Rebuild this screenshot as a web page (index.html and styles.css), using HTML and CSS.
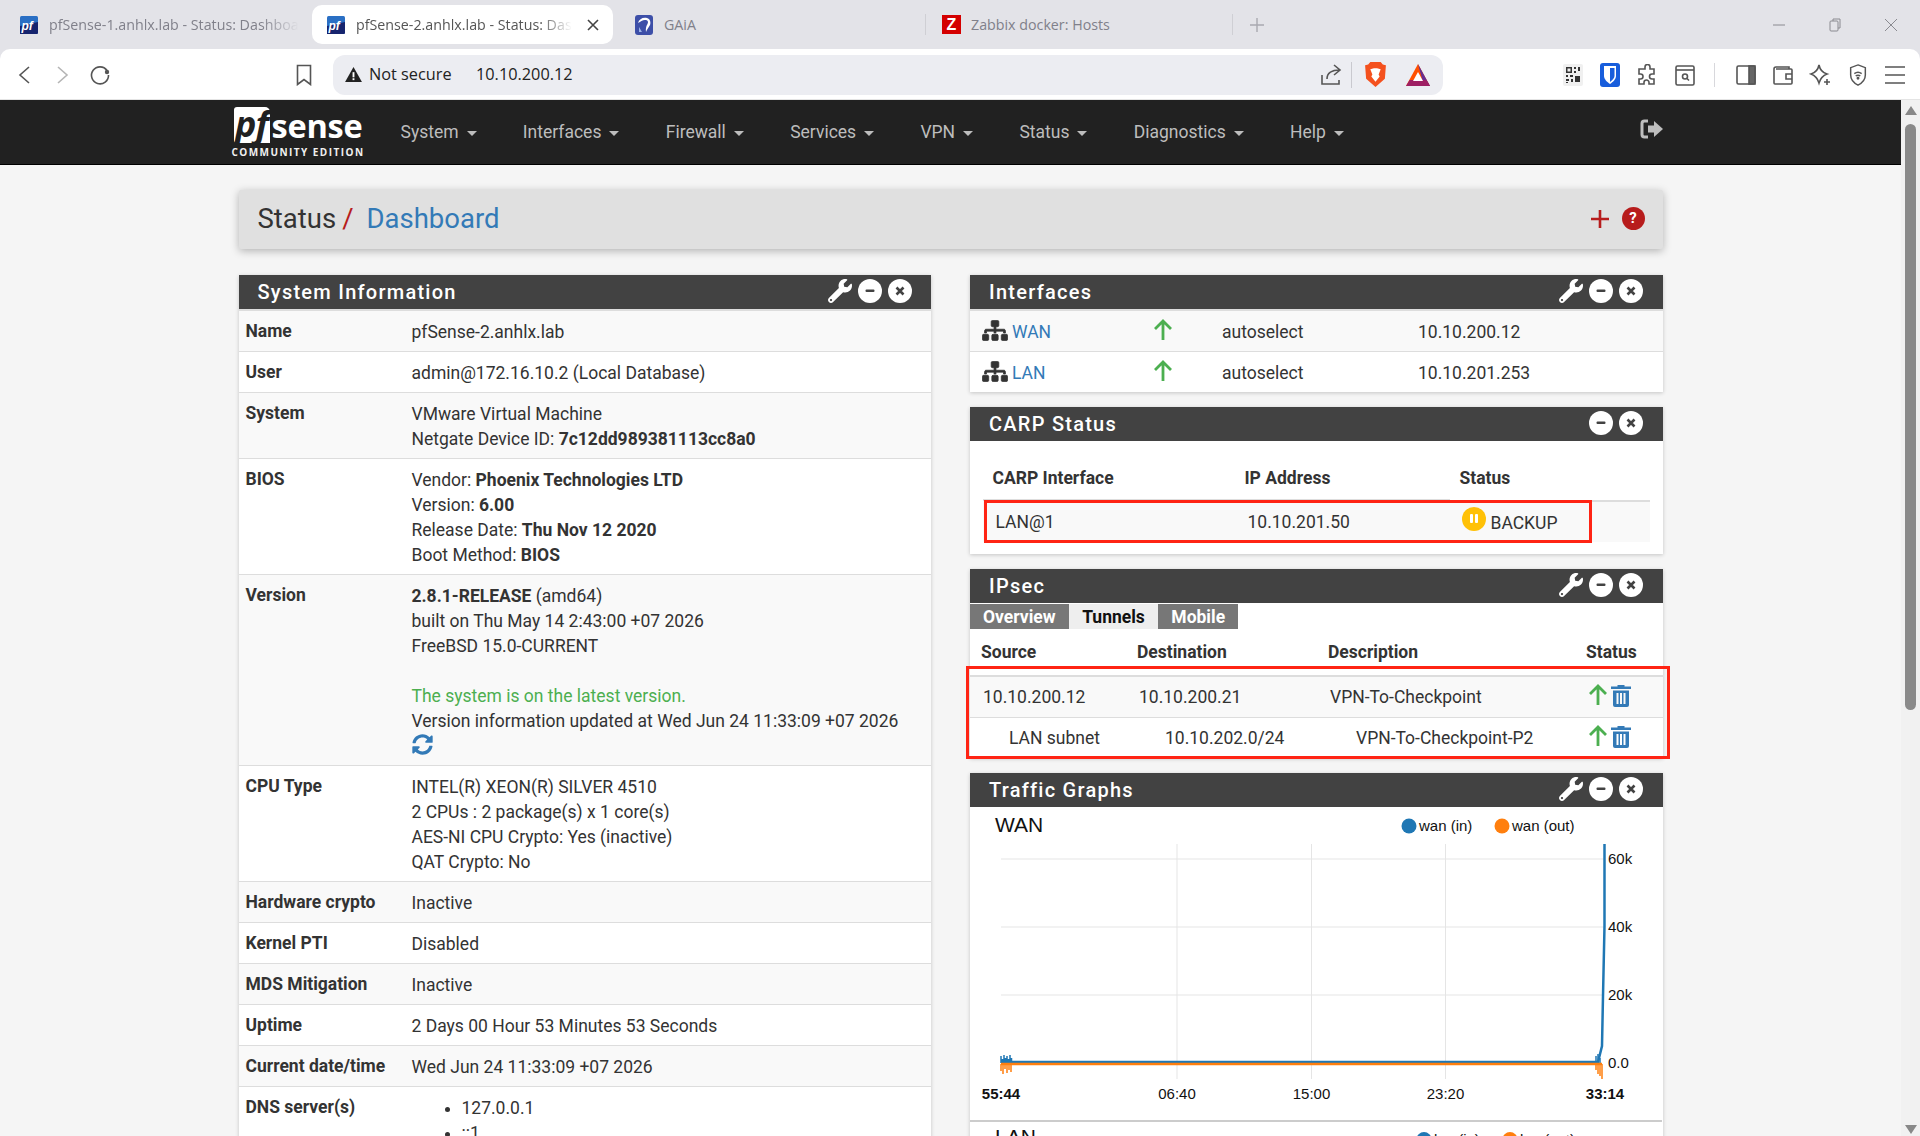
FILE: index.html
```html
<!DOCTYPE html>
<html lang="en">
<head>
<meta charset="UTF-8">
<title>pfSense-2.anhlx.lab - Status: Dashboard</title>
<link rel="stylesheet" href="styles.css">
</head>
<body>
<svg class="sprites" width="0" height="0">
    <symbol id="i-wrench" viewBox="0 0 512 512"><path d="M507.73 109.1c-2.24-9.03-13.54-12.09-20.12-5.51l-74.36 74.36-67.88-11.31-11.31-67.88 74.36-74.36c6.62-6.62 3.43-17.9-5.66-20.16-47.38-11.74-99.55.91-136.58 37.93-39.64 39.64-50.55 97.1-34.05 147.2L18.74 402.76c-24.99 24.99-24.99 65.51 0 90.5 24.99 24.99 65.51 24.99 90.5 0l213.21-213.21c50.12 16.71 107.47 5.68 147.37-34.22 37.07-37.07 49.7-89.32 37.91-136.73zM64 472c-13.25 0-24-10.75-24-24 0-13.26 10.75-24 24-24s24 10.74 24 24c0 13.25-10.75 24-24 24z"/></symbol>
    <symbol id="i-minus" viewBox="0 0 24 24"><circle cx="12" cy="12" r="12" fill="#fff"/><rect x="7.5" y="10.5" width="9" height="2.6" rx="1" fill="#424242"/></symbol>
    <symbol id="i-close" viewBox="0 0 24 24"><circle cx="12" cy="12" r="12" fill="#fff"/><path d="M8.5 8.5l7 7M15.500 8.500l-7 7" stroke="#424242" stroke-width="2.600" fill="none"/></symbol>
    <symbol id="i-sitemap" viewBox="-10 -10 660 532"><path d="M128 352H32c-17.67 0-32 14.33-32 32v96c0 17.67 14.33 32 32 32h96c17.67 0 32-14.33 32-32v-96c0-17.67-14.33-32-32-32zm-24-80h192v48h48v-48h192v48h48v-57.59c0-21.17-17.23-38.41-38.41-38.41H344v-64h40c17.67 0 32-14.33 32-32V32c0-17.67-14.33-32-32-32H256c-17.67 0-32 14.33-32 32v96c0 17.67 14.33 32 32 32h40v64H94.41C73.23 224 56 241.23 56 262.41V320h48v-48zm264 80h-96c-17.67 0-32 14.33-32 32v96c0 17.67 14.33 32 32 32h96c17.67 0 32-14.33 32-32v-96c0-17.67-14.33-32-32-32zm240 0h-96c-17.67 0-32 14.33-32 32v96c0 17.67 14.33 32 32 32h96c17.67 0 32-14.33 32-32v-96c0-17.67-14.33-32-32-32z" stroke="#333" stroke-width="20"/></symbol>
    <symbol id="i-up" viewBox="0 0 20 22"><path d="M10 21V2M2 10l8-8 8 8" fill="none" stroke="#4caf50" stroke-width="2.800"/></symbol>
    <symbol id="i-trash" viewBox="0 0 20 23"><path d="M6.500 2.500V1h7v1.500H20V5H0V2.500zM2 6.500h16V21a2 2 0 0 1-2 2H4a2 2 0 0 1-2-2zM5.500 9v11h2V9zm3.500 0v11h2V9zm3.500 0v11h2V9z" fill="#337ab7" fill-rule="evenodd"/></symbol>
    <symbol id="i-sync" viewBox="0 0 512 512"><path d="M370.72 133.28C339.458 104.008 298.888 87.962 255.848 88c-77.458.068-144.328 53.178-162.791 126.85-1.344 5.363-6.122 9.15-11.651 9.15H24.103c-7.498 0-13.194-6.807-11.807-14.176C33.933 94.924 134.813 8 256 8c66.448 0 126.791 26.136 171.315 68.685L463.03 40.97C478.149 25.851 504 36.559 504 57.941V192c0 13.255-10.745 24-24 24H345.941c-21.382 0-32.09-25.851-16.971-40.971l41.75-41.749zM32 296h134.059c21.382 0 32.09 25.851 16.971 40.971l-41.75 41.75c31.262 29.273 71.835 45.319 114.876 45.28 77.418-.07 144.315-53.144 162.787-126.849 1.344-5.363 6.122-9.15 11.651-9.15h57.304c7.498 0 13.194 6.807 11.807 14.176C478.067 417.076 377.187 504 256 504c-66.448 0-126.791-26.136-171.315-68.685L48.97 471.03C33.851 486.149 8 475.441 8 454.059V320c0-13.255 10.745-24 24-24z"/></symbol>
    <symbol id="i-pf" viewBox="0 0 18 18"><rect width="18" height="18" rx="1.500" fill="#2a6fc4"/><path d="M0 10L18 6V16.500a1.500 1.500 0 0 1-1.500 1.500H0z" fill="#16246e"/><text x="1.500" y="14" class="fav-text">pf</text></symbol>
</svg>

<div class="tabstrip">
    <div class="tab tab-first"><svg class="fav"><use href="#i-pf"/></svg><span class="tab-title tab-fade">pfSense-1.anhlx.lab - Status: Dashboa</span></div>
    <div class="tab tab-active"><svg class="fav"><use href="#i-pf"/></svg><span class="tab-title tab-fade">pfSense-2.anhlx.lab - Status: Das</span>
        <svg class="tab-x" viewBox="0 0 12 12"><path d="M1 1l10 10M11 1L1 11"/></svg></div>
    <div class="tab tab-gaia">
        <svg class="fav fav-gaia" viewBox="0 0 18 20"><rect width="18" height="20" rx="3" fill="#3d4fa8"/><path d="M3 8c1-4 5-6 9-5 3 1 4 4 3 7-1 2-3 4-4 7-.5-3 0-6 1.500-8 1-2 .5-3.500-1.500-4-3-.5-5 1-8 3z" fill="#fff"/><path d="M4 12l3 5H4z" fill="#9db4e8"/></svg>
        <span class="tab-title">GAiA</span></div>
    <div class="tab-sep"></div>
    <div class="tab tab-zabbix"><span class="fav-z">Z</span><span class="tab-title">Zabbix docker: Hosts</span></div>
    <div class="tab-sep"></div>
    <svg class="tab-plus" viewBox="0 0 14 14"><path d="M7 0v14M0 7h14"/></svg>
    <div class="win-controls">
        <svg class="win-btn" viewBox="0 0 14 14"><path d="M1 7h12"/></svg>
        <svg class="win-btn" viewBox="0 0 14 14"><rect x="2" y="3" width="8" height="10" rx="1"/><path d="M5 3V1h7v9h-2"/></svg>
        <svg class="win-btn" viewBox="0 0 14 14"><path d="M1 1l12 12M13 1L1 13"/></svg>
    </div>
</div>

<div class="toolbar">
    <span class="tb-btn"><svg class="tb-icon" viewBox="0 0 22 22"><path d="M15 3L6 11l9 8"/></svg></span>
    <span class="tb-btn"><svg class="tb-icon tb-dim" viewBox="0 0 22 22"><path d="M7 3l9 8-9 8"/></svg></span>
    <span class="tb-btn"><svg class="tb-icon" viewBox="0 0 22 22"><path d="M18 6.500A8.500 8.500 0 1 0 19.500 11"/><circle cx="18" cy="8" r="2.200" fill="#555" stroke="none"/></svg></span>
    <span class="tb-btn tb-bookmark"><svg class="tb-icon" viewBox="0 0 22 22"><path d="M4.500 1.500h13v19L11 15.500l-6.500 5z"/></svg></span>
    <div class="address">
        <svg class="warn" viewBox="0 0 18 16"><path d="M9 0l9 16H0z" fill="#222"/><rect x="8" y="5.500" width="2" height="5.500" fill="#fff"/><rect x="8" y="12" width="2" height="2" fill="#fff"/></svg>
        <span class="not-secure">Not secure</span>
        <span class="url">10.10.200.12</span>
        <span class="addr-spacer"></span>
        <svg class="tb-icon addr-share" viewBox="0 0 22 22"><path d="M2 11v9h17v-4M7 15c0-6 4-9 13-9M14 1l6 5-6 5"/></svg>
        <span class="addr-sep"></span>
        <svg class="brave" viewBox="0 0 20 24"><path d="M5 0h10l2 2.500L20 3l-1 13-9 8-9-8L0 3l3-.500z" fill="#f4511e"/><path d="M5 7l3.500-1h3L15 7l-2 5 1 2-4 5-4-5 1-2z" fill="#fff"/></svg>
        <svg class="bat" viewBox="0 0 24 22"><path d="M12 0l12 22H0z" fill="#ff5000"/><path d="M12 0l12 22h-6z" fill="#662d91"/><path d="M0 22l3.600-6h16.800l3.600 6z" fill="#9e1f63"/><path d="M12 8l5 9H7z" fill="#fff"/></svg>
    </div>
    <span class="tb-btn tb-exts"><svg class="ext-qr" viewBox="0 0 20 22"><rect width="20" height="22" rx="2" fill="#f0f0f0"/><path d="M3 3h6v6H3zM4.500 4.500v3h3v-3zM11 3h2v2h-2zM15 3h2v4h-2zM11 7h2v2h-2zM3 11h2v2H3zM7 11h3v2H7zM3 15h3v2H3zM8 15h2v3H8zM3 18h2v1H3zM12 12h5v6h-5z" fill="#333" fill-rule="evenodd"/></svg></span>
    <span class="tb-btn"><svg class="ext-bw" viewBox="0 0 20 24"><rect width="20" height="24" rx="3" fill="#175ddc"/><path d="M4 3h12v10c0 3-3 6-6 8-3-2-6-5-6-8z" fill="#fff"/><path d="M10 5h4.500v8c0 2-2 4-4.500 6z" fill="#175ddc"/></svg></span>
    <span class="tb-btn"><svg class="tb-icon" viewBox="0 0 22 22"><path d="M9 3a2.500 2.500 0 0 1 5 0v2h4v5h-2a2.500 2.500 0 0 0 0 5h2v5h-5v-1.500a2.500 2.500 0 0 0-5 0V20H3v-5h1.500a2.500 2.500 0 0 0 0-5H3V5h6z"/></svg></span>
    <span class="tb-btn"><svg class="tb-icon" viewBox="0 0 22 22"><rect x="2" y="2" width="18" height="19" rx="1.500"/><path d="M2 6h18"/><circle cx="11" cy="12.500" r="2.500"/><path d="M13 14.500l2 2"/></svg></span>
    <span class="tb-sep"></span>
    <span class="tb-btn"><svg class="tb-icon" viewBox="0 0 22 22"><rect x="2" y="2" width="18" height="18" rx="1.500"/><rect x="14" y="2" width="6" height="18" fill="#666"/></svg></span>
    <span class="tb-btn"><svg class="tb-icon" viewBox="0 0 22 22"><path d="M17 5V3H4a2 2 0 0 0-2 2v14a1 1 0 0 0 1 1h16a1 1 0 0 0 1-1V6a1 1 0 0 0-1-1H4"/><path d="M20 10h-6v5h6"/></svg></span>
    <span class="tb-btn"><svg class="tb-icon" viewBox="0 0 22 22"><path d="M10 1c1 5 3 7.500 8 9-4 1.500-6.500 4-8 9-1.500-5-4-7.500-8-9 5-1.500 7-4 8-9z"/><path d="M18 15v6M15 18h6"/></svg></span>
    <span class="tb-btn"><svg class="tb-icon" viewBox="0 0 22 24"><path d="M11 1l8 3v8c0 5-4 9-8 11-4-2-8-6-8-11V4z"/><path d="M7 10.500c2.500-2 5.500-2 8 0M8.500 13c1.500-1 3.500-1 5 0"/><circle cx="11" cy="15.500" r=".8"/></svg></span>
    <span class="tb-btn"><svg class="tb-icon" viewBox="0 0 22 22"><path d="M1 3h20M1 11h20M1 19h20"/></svg></span>
</div>

<div class="viewport">
    <div class="page">
        <nav class="navbar">
            <div class="nav-inner">
                <div class="brand">
                    <div class="brand-mark"><span class="brand-pf">pf</span><span class="brand-sense">sense</span></div>
                    <div class="brand-sub">COMMUNITY EDITION</div>
                </div>
                <ul class="nav-menu">
                    <li>System<span class="caret"></span></li>
                    <li>Interfaces<span class="caret"></span></li>
                    <li>Firewall<span class="caret"></span></li>
                    <li>Services<span class="caret"></span></li>
                    <li>VPN<span class="caret"></span></li>
                    <li>Status<span class="caret"></span></li>
                    <li>Diagnostics<span class="caret"></span></li>
                    <li>Help<span class="caret"></span></li>
                </ul>
                <svg class="logout" viewBox="0 0 24 20"><path d="M8 2H4.500A2.500 2.500 0 0 0 2 4.500v11A2.500 2.500 0 0 0 4.500 18H8" fill="none" stroke="#bdbdbd" stroke-width="3"/><path d="M14 2l9 8-9 8v-4.500H8v-7h6z" fill="#bdbdbd"/></svg>
            </div>
        </nav>

        <div class="container">
            <header class="crumbs">
                <h1><span>Status</span><span class="crumb-sep">/</span><a href="#">Dashboard</a></h1>
                <div class="crumb-actions">
                    <svg class="crumb-plus" viewBox="0 0 18 18"><path d="M9 0v18M0 9h18"/></svg>
                    <span class="crumb-help">?</span>
                </div>
            </header>

            <div class="columns">
                <div class="col">
                    <section class="panel">
                        <div class="panel-heading">
                            <h2>System Information</h2>
                            <div class="panel-tools">
                                <svg class="tool-wrench"><use href="#i-wrench"/></svg>
                                <svg class="tool-dot"><use href="#i-minus"/></svg>
                                <svg class="tool-dot"><use href="#i-close"/></svg>
                            </div>
                        </div>
                        <table class="table sysinfo">
                            <tr><th>Name</th><td>pfSense-2.anhlx.lab</td></tr>
                            <tr><th>User</th><td>admin@172.16.10.2 (Local Database)</td></tr>
                            <tr><th>System</th><td>VMware Virtual Machine<br>Netgate Device ID: <b>7c12dd989381113cc8a0</b></td></tr>
                            <tr><th>BIOS</th><td>Vendor: <b>Phoenix Technologies LTD</b><br>Version: <b>6.00</b><br>Release Date: <b>Thu Nov 12 2020</b><br>Boot Method: <b>BIOS</b></td></tr>
                            <tr><th>Version</th><td><b>2.8.1-RELEASE</b> (amd64)<br>built on Thu May 14 2:43:00 +07 2026<br>FreeBSD 15.0-CURRENT<br><br><span class="ok-text">The system is on the latest version.</span><br>Version information updated at Wed Jun 24 11:33:09 +07 2026<br><svg class="sync"><use href="#i-sync"/></svg></td></tr>
                            <tr><th>CPU Type</th><td>INTEL(R) XEON(R) SILVER 4510<br>2 CPUs : 2 package(s) x 1 core(s)<br>AES-NI CPU Crypto: Yes (inactive)<br>QAT Crypto: No</td></tr>
                            <tr><th>Hardware crypto</th><td>Inactive</td></tr>
                            <tr><th>Kernel PTI</th><td>Disabled</td></tr>
                            <tr><th>MDS Mitigation</th><td>Inactive</td></tr>
                            <tr><th>Uptime</th><td>2 Days 00 Hour 53 Minutes 53 Seconds</td></tr>
                            <tr><th>Current date/time</th><td>Wed Jun 24 11:33:09 +07 2026</td></tr>
                            <tr><th>DNS server(s)</th><td><ul class="dns"><li>127.0.0.1</li><li>::1</li></ul></td></tr>
                        </table>
                    </section>
                </div>

                <div class="col">
                    <section class="panel">
                        <div class="panel-heading">
                            <h2>Interfaces</h2>
                            <div class="panel-tools">
                                <svg class="tool-wrench"><use href="#i-wrench"/></svg>
                                <svg class="tool-dot"><use href="#i-minus"/></svg>
                                <svg class="tool-dot"><use href="#i-close"/></svg>
                            </div>
                        </div>
                        <table class="table ifaces">
                            <tr><td class="if-name"><svg class="sitemap"><use href="#i-sitemap"/></svg><a href="#">WAN</a></td><td class="if-state"><svg class="arrow"><use href="#i-up"/></svg></td><td class="if-media">autoselect</td><td>10.10.200.12</td></tr>
                            <tr><td class="if-name"><svg class="sitemap"><use href="#i-sitemap"/></svg><a href="#">LAN</a></td><td class="if-state"><svg class="arrow"><use href="#i-up"/></svg></td><td class="if-media">autoselect</td><td>10.10.201.253</td></tr>
                        </table>
                    </section>

                    <section class="panel">
                        <div class="panel-heading">
                            <h2>CARP Status</h2>
                            <div class="panel-tools">
                                <svg class="tool-dot"><use href="#i-minus"/></svg>
                                <svg class="tool-dot"><use href="#i-close"/></svg>
                            </div>
                        </div>
                        <div class="carp-body">
                            <table class="table carp">
                                <tr class="head"><th class="c1">CARP Interface</th><th class="c2">IP Address</th><th>Status</th></tr>
                                <tr><td>LAN@1</td><td>10.10.201.50</td><td class="carp-state"><span class="pause"><i></i><i></i></span>BACKUP</td></tr>
                            </table>
                            <div class="red-box carp-box"></div>
                        </div>
                    </section>

                    <section class="panel">
                        <div class="panel-heading">
                            <h2>IPsec</h2>
                            <div class="panel-tools">
                                <svg class="tool-wrench"><use href="#i-wrench"/></svg>
                                <svg class="tool-dot"><use href="#i-minus"/></svg>
                                <svg class="tool-dot"><use href="#i-close"/></svg>
                            </div>
                        </div>
                        <div class="ipsec-body">
                            <div class="tabs">
                                <span class="tabs-item">Overview</span>
                                <span class="tabs-item tabs-on">Tunnels</span>
                                <span class="tabs-item">Mobile</span>
                            </div>
                            <table class="table ipsec">
                                <tr class="head"><th class="s1">Source</th><th class="s2">Destination</th><th class="s3">Description</th><th>Status</th></tr>
                                <tr><td>10.10.200.12</td><td>10.10.200.21</td><td>VPN-To-Checkpoint</td><td class="ipsec-icons"><svg class="arrow"><use href="#i-up"/></svg><svg class="trash"><use href="#i-trash"/></svg></td></tr>
                                <tr class="child"><td>LAN subnet</td><td>10.10.202.0/24</td><td>VPN-To-Checkpoint-P2</td><td class="ipsec-icons"><svg class="arrow"><use href="#i-up"/></svg><svg class="trash"><use href="#i-trash"/></svg></td></tr>
                            </table>
                            <div class="red-box ipsec-box"></div>
                        </div>
                    </section>

                    <section class="panel">
                        <div class="panel-heading">
                            <h2>Traffic Graphs</h2>
                            <div class="panel-tools">
                                <svg class="tool-wrench"><use href="#i-wrench"/></svg>
                                <svg class="tool-dot"><use href="#i-minus"/></svg>
                                <svg class="tool-dot"><use href="#i-close"/></svg>
                            </div>
                        </div>
                        <svg class="graph" viewBox="0 1 692 313">
                            <text x="25" y="26" class="g-title">WAN</text>
                            <circle cx="439" cy="20" r="7.500" fill="#1f77b4"/>
                            <text x="449" y="25" class="g-label">wan (in)</text>
                            <circle cx="532" cy="20" r="7.500" fill="#ff7f0e"/>
                            <text x="542" y="25" class="g-label">wan (out)</text>
                            <path class="g-grid" d="M31 53H634M31 121H634M31 189H634M207 38V273M341.500 38V273M475.500 38V273"/>
                            <path class="g-in" d="M31 257V250M32.500 257V253M34 257V249M35.500 257V252M37 257V250M38.500 257V253M40 257V249M41.500 257V252M626 257V250M628 257V248M630 257V252"/>
                            <path class="g-out" d="M31 258V265M33 258V268M35 258V263M37 258V267M39 258V264M41 258V266M626 258V264M628 258V268M630 258V270M632 258V273"/>
                            <path class="g-in-line" d="M31 256H628L632 240L633 190L634.500 120V38"/>
                            <path class="g-out-line" d="M31 258H632"/>
                            <text x="638" y="58" class="g-label">60k</text>
                            <text x="638" y="126" class="g-label">40k</text>
                            <text x="638" y="194" class="g-label">20k</text>
                            <text x="638" y="262" class="g-label">0.0</text>
                            <text x="31" y="293" class="g-label g-mid g-bold">55:44</text>
                            <text x="207" y="293" class="g-label g-mid">06:40</text>
                            <text x="341.500" y="293" class="g-label g-mid">15:00</text>
                            <text x="475.500" y="293" class="g-label g-mid">23:20</text>
                            <text x="635" y="293" class="g-label g-mid g-bold">33:14</text>
                        </svg>
                        <svg class="graph graph-next" viewBox="0 0 692 60">
                            <text x="25" y="22" class="g-title">LAN</text>
                            <circle cx="454" cy="17.500" r="7.500" fill="#1f77b4"/>
                            <text x="464" y="22.500" class="g-label">lan (in)</text>
                            <circle cx="540" cy="17.500" r="7.500" fill="#ff7f0e"/>
                            <text x="550" y="22.500" class="g-label">lan (out)</text>
                        </svg>
                    </section>
                </div>
            </div>
        </div>
    </div>
    <div class="scrollbar">
        <span class="sb-up"></span>
        <span class="sb-thumb"></span>
        <span class="sb-down"></span>
    </div>
</div>
</body>
</html>
```

FILE: styles.css
```css
* { box-sizing: border-box; }
html, body { height: 100%; }
body {
    margin: 0;
    height: 1136px;
    overflow: hidden;
    display: flex;
    flex-direction: column;
    background: #e3e3e8;
    font-family: Roboto, "Liberation Sans", sans-serif;
    font-size: 17.5px;
    line-height: 25px;
    color: #333;
}
a { color: #337ab7; text-decoration: none; }
.sprites { position: absolute; }

/* browser chrome */
.tabstrip {
    height: 49px;
    flex: none;
    display: flex;
    align-items: center;
    font-family: "Open Sans", sans-serif;
    font-size: 14.25px;
    color: #80808a;
}
.tab {
    height: 39px;
    display: flex;
    align-items: center;
    flex: none;
    position: relative;
}
.tab-first { width: 312px; padding-left: 20px; }
.tab-active { width: 301px; padding-left: 15px; background: #fff; border-radius: 10px; color: #555; }
.tab-gaia { width: 312px; padding-left: 22px; }
.tab-zabbix { width: 306px; padding-left: 16px; }
.fav { width: 18px; height: 18px; flex: none; margin-right: 11px; }
.fav-gaia { height: 20px; margin-right: 11px; }
.fav-text { font: italic 700 12px "Liberation Sans", sans-serif; fill: #fff; }
.fav-z {
    width: 19px;
    height: 19px;
    margin-right: 10px;
    background: #d40000;
    color: #fff;
    font: 700 16px/19px "Liberation Sans", sans-serif;
    text-align: center;
}
.tab-title { white-space: nowrap; }
.tab-fade {
    -webkit-mask-image: linear-gradient(to right, #000 85%, transparent);
    mask-image: linear-gradient(to right, #000 85%, transparent);
}
.tab-x { width: 12px; height: 12px; position: absolute; right: 14px; stroke: #444; stroke-width: 1.6; fill: none; }
.tab-sep { width: 1px; height: 21px; background: #cfcfd4; flex: none; }
.tab-plus { width: 14px; height: 14px; margin-left: 17px; stroke: #a9a9b0; stroke-width: 1.4; fill: none; flex: none; }
.win-controls { margin-left: auto; display: flex; gap: 42px; padding-right: 22px; }
.win-btn { width: 14px; height: 14px; stroke: #8a8a90; stroke-width: 1; fill: none; }

.toolbar {
    height: 51px;
    flex: none;
    display: flex;
    align-items: center;
    background: #fff;
    padding: 1px 0 0 6.5px;
    border-radius: 10px 10px 0 0;
    border-bottom: 1px solid #e4e4e4;
}
.tb-btn { width: 37.3px; height: 26px; flex: none; display: flex; align-items: center; justify-content: center; }
.tb-icon { width: 22px; height: 22px; fill: none; stroke: #555; stroke-width: 1.6; }
.tb-dim { stroke: #b5b5b5; }
.tb-bookmark { margin-left: 167px; }
.address {
    width: 1110px;
    height: 40px;
    margin-left: 10.3px;
    flex: none;
    display: flex;
    align-items: center;
    background: #ecedf2;
    border-radius: 12px;
    padding-left: 12px;
    font-family: "Open Sans", sans-serif;
    font-size: 16.3px;
    color: #222;
}
.warn { width: 17px; height: 15px; flex: none; }
.not-secure { margin-left: 7px; width: 107px; }
.addr-spacer { flex: 1; }
.addr-share { margin-right: 9px; }
.addr-sep { width: 1px; height: 26px; background: #c9c9cf; }
.brave { width: 21px; height: 25px; margin-left: 13px; }
.bat { width: 24px; height: 22px; margin-left: 20px; margin-right: 13px; }
.tb-exts { margin-left: 111px; }
.ext-qr { width: 20px; height: 22px; }
.ext-bw { width: 20px; height: 24px; }
.tb-sep { width: 1px; height: 24px; background: #d8d8dc; margin: 0 12px 0 11px; flex: none; }

/* page */
.viewport { flex: 1; display: flex; min-height: 0; }
.page { flex: 1; min-width: 0; overflow: hidden; background: #f5f5f5; }
.scrollbar {
    width: 19px;
    flex: none;
    background: #f1f1f1;
    position: relative;
    display: flex;
    flex-direction: column;
    align-items: center;
}
.sb-up, .sb-down { width: 0; height: 0; border-left: 6px solid transparent; border-right: 6px solid transparent; }
.sb-up { margin-top: 6px; border-bottom: 9px solid #888; }
.sb-thumb { width: 11px; height: 586px; margin-top: 9px; background: #8a8a8a; border-radius: 6px; }
.sb-down { margin-top: auto; margin-bottom: 2px; border-top: 9px solid #888; }

.navbar { height: 65px; background: #212121; border-bottom: 1px solid #000; }
.nav-inner { width: 1424px; margin: 0 auto; height: 64px; position: relative; display: flex; align-items: center; padding-left: 162px; }
.brand { position: absolute; left: -7px; top: 7px; width: 140px; }
.brand-mark { display: flex; align-items: flex-end; height: 36px; padding-left: 2px; }
.brand-pf {
    width: 36px;
    height: 36px;
    background: #fff;
    border-radius: 3px 5px 0 3px;
    color: #212121;
    font: italic 700 36px/33px "Open Sans", sans-serif;
    letter-spacing: -1px;
    text-align: center;
}
.brand-sense { margin-left: 2px; color: #fff; font: 700 32.5px/34px "Open Sans", sans-serif; letter-spacing: -.2px; }
.brand-sub { margin-top: 3px; color: #f0f0f0; font: 700 10px/12px "Open Sans", sans-serif; letter-spacing: 1.45px; white-space: nowrap; }
.nav-menu { list-style: none; margin: 0; padding: 0; display: flex; gap: 46.3px; color: #bdbdbd; }
.nav-menu li { display: flex; align-items: center; }
.caret { width: 0; height: 0; margin-left: 8px; margin-top: 2px; border-left: 5px solid transparent; border-right: 5px solid transparent; border-top: 5px solid #bdbdbd; }
.logout { width: 24px; height: 20px; position: absolute; left: 1401px; top: 19px; }

.container { width: 1424px; margin: 25px auto 0; }
.crumbs {
    height: 59px;
    background: #e0e0e0;
    border-radius: 2px;
    box-shadow: 0 2px 8px rgba(0, 0, 0, .28);
    padding: 0 18px 2px 19px;
    display: flex;
    align-items: center;
    justify-content: space-between;
}
.crumbs h1 { margin: 0; font-size: 27.5px; font-weight: 400; line-height: 34px; color: #333; }
.crumb-sep { color: #b71c1c; margin: 0 13px 0 6px; }
.crumb-actions { display: flex; align-items: center; gap: 13px; }
.crumb-plus { width: 18px; height: 18px; stroke: #b71c1c; stroke-width: 2.6; fill: none; }
.crumb-help {
    width: 23px;
    height: 23px;
    border-radius: 50%;
    background: #b71c1c;
    color: #fff;
    font: 700 15px/23px Roboto, sans-serif;
    text-align: center;
}

.columns { display: flex; gap: 39px; margin-top: 26px; }
.col { flex: 1; min-width: 0; }
.panel { background: #fff; margin-bottom: 15px; box-shadow: 0 1px 4px rgba(0, 0, 0, .2); }
.panel-heading {
    height: 34px;
    background: #424242;
    padding: 0 19.5px 0 19px;
    display: flex;
    align-items: center;
    justify-content: space-between;
}
.panel-heading h2 { margin: 0; color: #fff; font-size: 20px; font-weight: 500; letter-spacing: 1.25px; line-height: 34px; }
.panel-tools { display: flex; align-items: center; gap: 6px; margin-top: -2px; }
.tool-wrench { width: 24px; height: 24px; fill: #fff; }
.tool-dot { width: 24px; height: 24px; }

.table { width: 100%; border-collapse: collapse; }
.table th, .table td { padding: 7.5px 6px; text-align: left; vertical-align: top; border-top: 1px solid #ddd; }
.table td { padding-top: 8.5px; padding-bottom: 6.5px; }
.table th { font-weight: 700; }
.table tr:first-child th, .table tr:first-child td { border-top: 2px solid #ddd; }
.sysinfo th { width: 167px; padding-left: 7px; white-space: nowrap; }
.sysinfo tr:nth-child(odd), .ifaces tr:nth-child(odd) { background: #f9f9f9; }
.ok-text { color: #4caf50; }
.sync { width: 21px; height: 21px; fill: #337ab7; vertical-align: -3px; }
.dns { margin: 0; padding-left: 50px; }

.ifaces .if-name { width: 173px; padding-left: 12px; }
.ifaces .if-state { width: 73px; padding-left: 10px; padding-top: 7.5px; }
.ifaces .if-media { width: 196px; }
.sitemap { width: 26px; height: 21px; fill: #333; margin-right: 4px; vertical-align: -3px; }
.arrow { width: 20px; height: 22px; vertical-align: top; }
.ifaces .arrow { display: block; }

.carp-body { position: relative; padding: 18px 12.500px 12px 12.500px; }
.carp tr.head th { border-top: 0; padding: 6.500px 12px 8.500px 10px; }
.carp .c1 { width: 252px; }
.carp .c2 { width: 215px; }
.carp tr:nth-child(2) { background: #f9f9f9; }
.carp tr:nth-child(2) td { border-top: 2px solid #ddd; padding-left: 13px; }
.carp tr:nth-child(2) td.carp-state { padding-left: 12px; }
.carp-state { display: flex; align-items: center; }
.pause {
    width: 24px;
    height: 24px;
    margin: -9px 5px 0 0;
    border-radius: 50%;
    background: #ffc107;
    display: flex;
    align-items: center;
    justify-content: center;
    gap: 2px;
}
.pause i { width: 3px; height: 9px; background: #fff; border-radius: 1px; }

.red-box { position: absolute; border: 3px solid #ff2414; pointer-events: none; }
.carp-box { left: 14px; top: 59px; width: 608px; height: 43px; }
.ipsec-box { left: -4px; top: 63px; width: 704px; height: 93px; }

.ipsec-body { position: relative; }
.tabs { display: flex; height: 26px; padding-top: 1px; font-weight: 700; }
.tabs-item { background: #777; color: #fff; padding: 0 13px; line-height: 27px; }
.tabs-on { background: #eee; color: #111; padding: 0 13.5px; }
.ipsec { table-layout: fixed; }
.ipsec tr.head th { border-top: 0; border-bottom: 2px solid #ddd; padding: 11px 6px 9.500px 11px; }
.ipsec .s1 { width: 156px; }
.ipsec .s2 { width: 191px; }
.ipsec .s3 { width: 258px; }
.ipsec td { padding-left: 13px; }
.ipsec tr:nth-child(2) { background: #f9f9f9; }
.ipsec tr:nth-child(2) td { border-top: 0; }
.ipsec .child td:first-child, .ipsec .child td:nth-child(2), .ipsec .child td:nth-child(3) { padding-left: 39px; white-space: nowrap; }
.ipsec td.ipsec-icons { padding-left: 13px; padding-top: 7.5px; white-space: nowrap; }
.trash { width: 20px; height: 23px; margin-left: 3px; vertical-align: top; }

.graph { display: block; width: 692px; background: #fff; }
.graph-next { border-top: 2px solid #ccc; height: 62px; }
.g-title { font: 21px "Liberation Sans", sans-serif; fill: #111; }
.g-label { font: 15px "Liberation Sans", sans-serif; fill: #111; }
.g-mid { text-anchor: middle; }
.g-bold { font-weight: 700; }
.g-grid { stroke: #e5e5e5; stroke-width: 1; fill: none; }
.g-in { stroke: #1f77b4; stroke-width: 1.500; fill: none; }
.g-out { stroke: #ff7f0e; stroke-width: 1.500; fill: none; }
.g-in-line { stroke: #1f77b4; stroke-width: 2.500; fill: none; }
.g-out-line { stroke: #ff7f0e; stroke-width: 2.500; fill: none; }
```
